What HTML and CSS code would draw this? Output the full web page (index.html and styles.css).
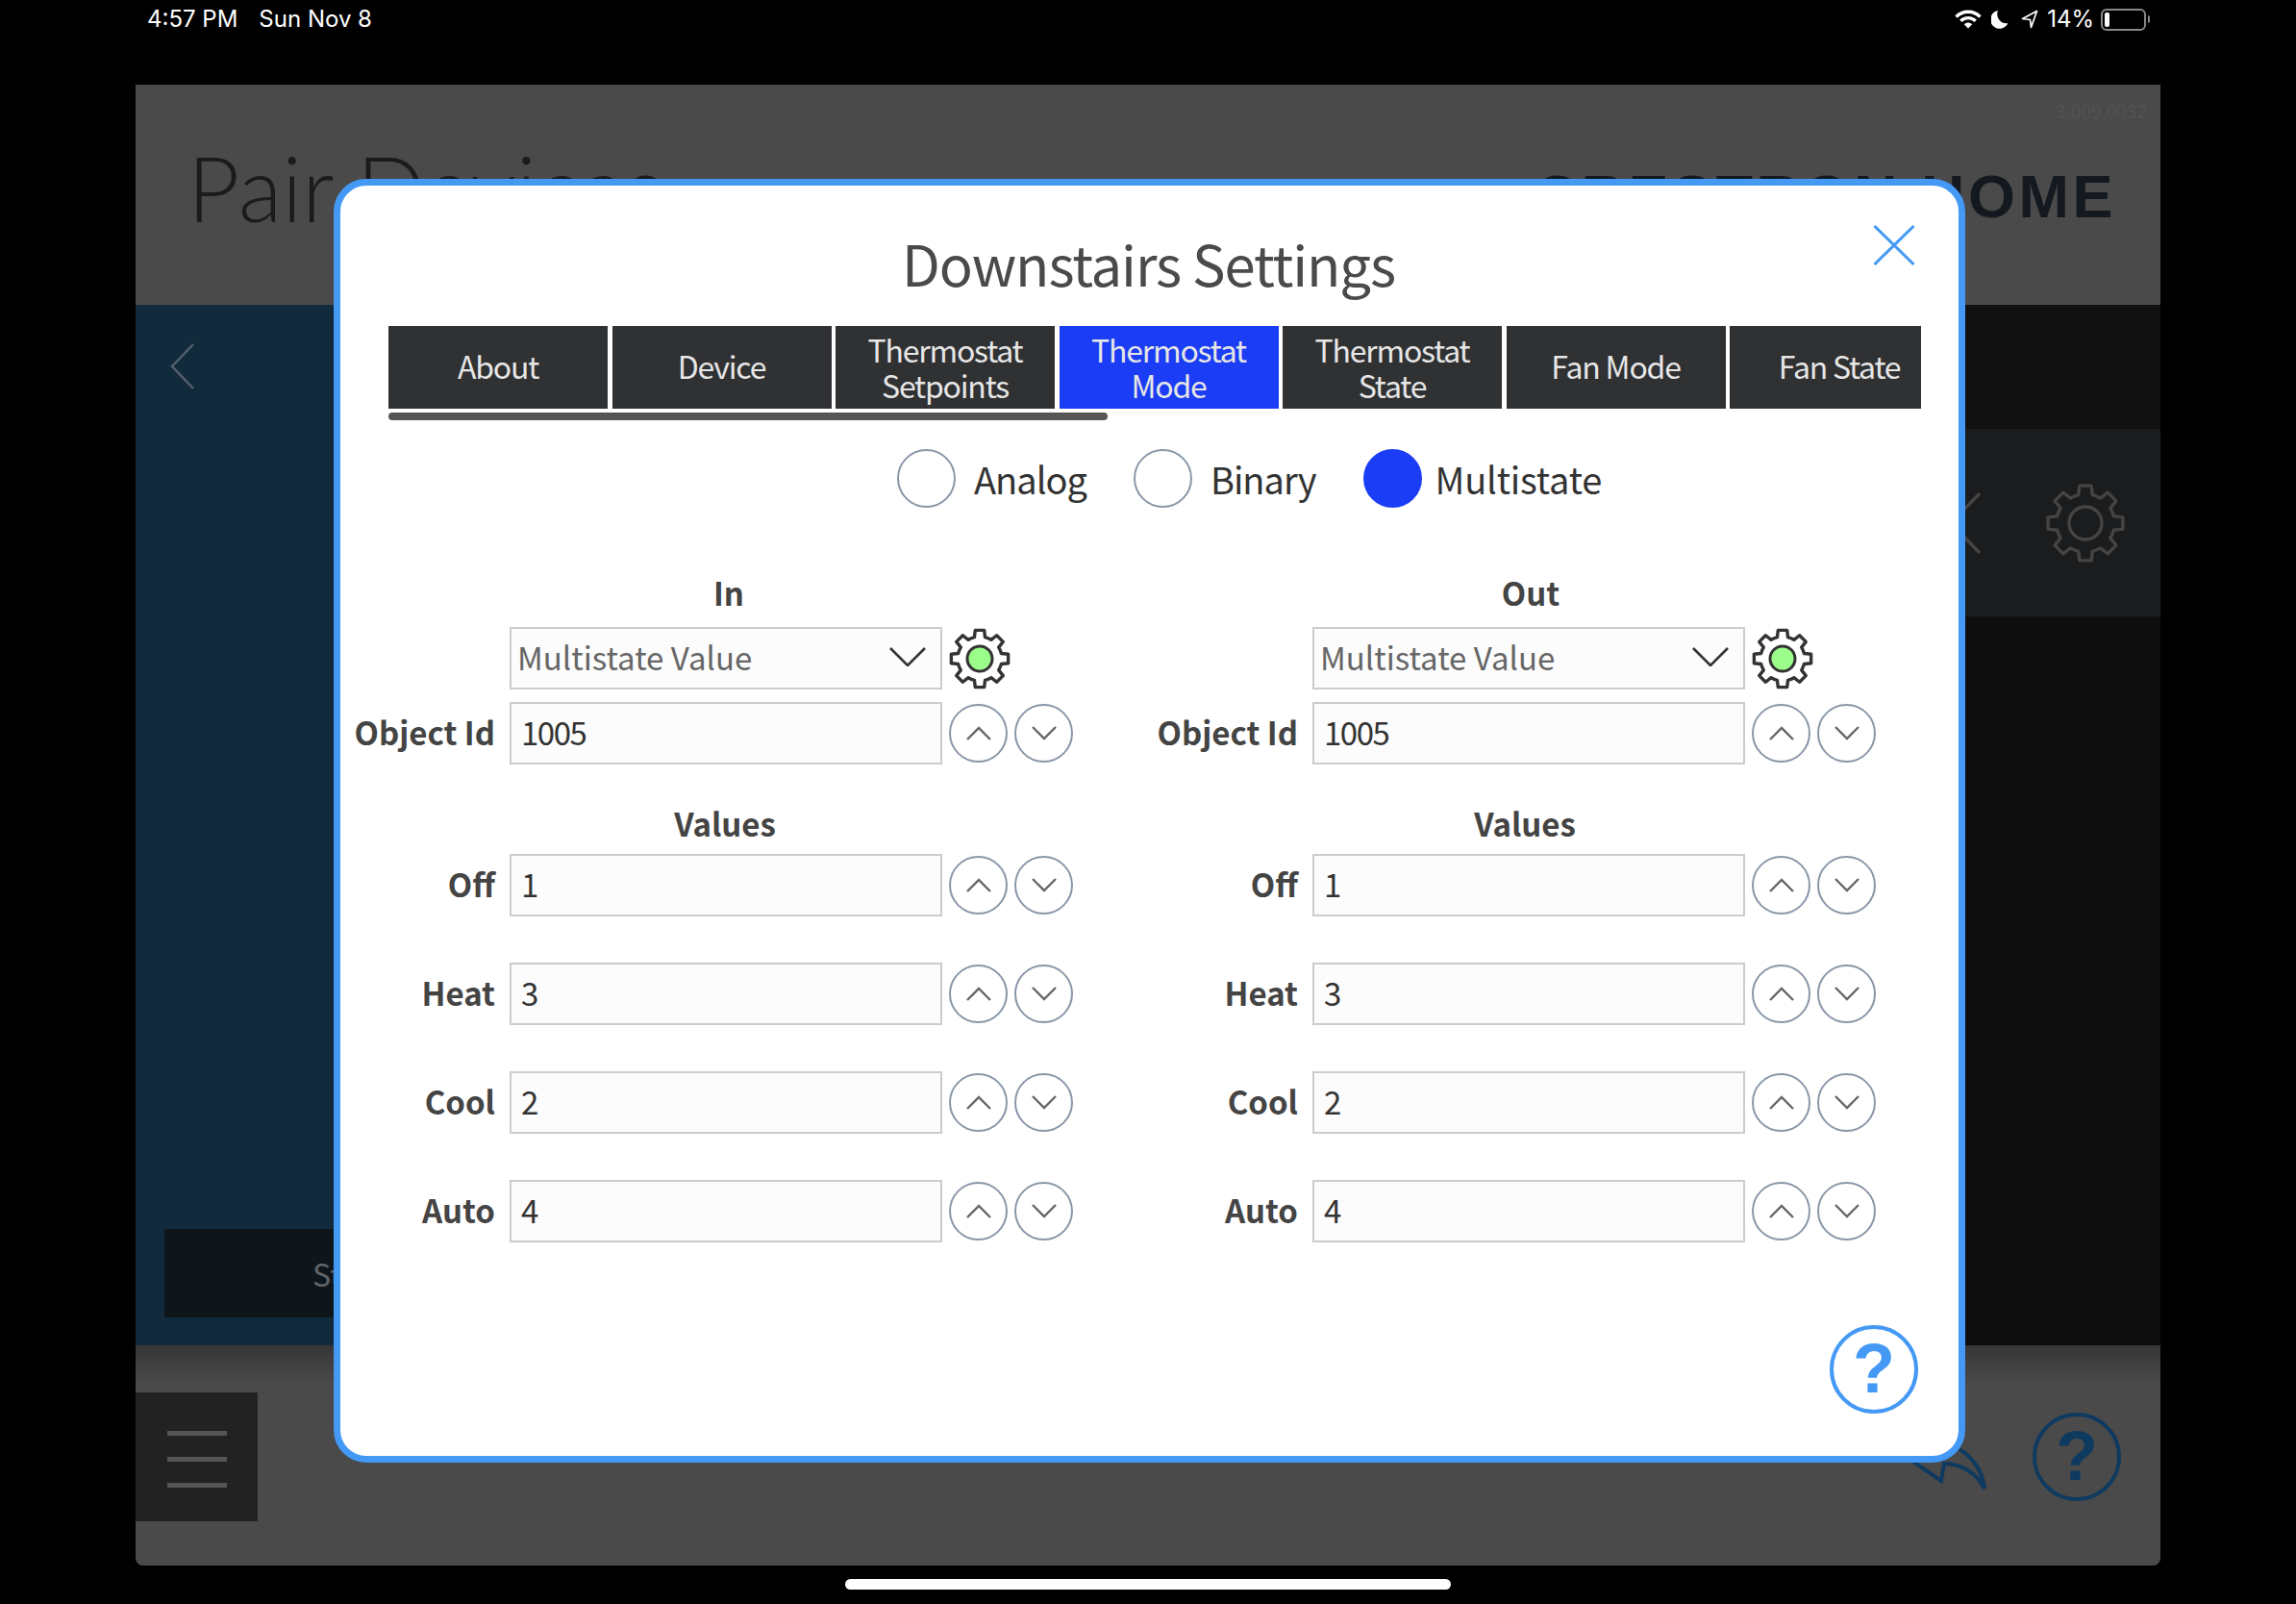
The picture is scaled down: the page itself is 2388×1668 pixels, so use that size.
FILE: index.html
```html
<!DOCTYPE html>
<html lang="en">

<head>
    <meta charset="UTF-8">
    <meta name="viewport" content="width=device-width, initial-scale=1.0">
    <title>Downstairs Settings</title>
    <link rel="stylesheet" href="styles.css">
</head>

<body>
    <svg class="defs" width="0" height="0">
        <defs>
            <path id="gearShape" d="M-5.56 -22.32L-4.69 -29.63L4.69 -29.63L5.56 -22.32A23 23 0 0 1 11.85 -19.71L17.64 -24.27L24.27 -17.64L19.71 -11.85A23 23 0 0 1 22.32 -5.56L29.63 -4.69L29.63 4.69L22.32 5.56A23 23 0 0 1 19.71 11.85L24.27 17.64L17.64 24.27L11.85 19.71A23 23 0 0 1 5.56 22.32L4.69 29.63L-4.69 29.63L-5.56 22.32A23 23 0 0 1 -11.85 19.71L-17.64 24.27L-24.27 17.64L-19.71 11.85A23 23 0 0 1 -22.32 5.56L-29.63 4.69L-29.63 -4.69L-22.32 -5.56A23 23 0 0 1 -19.71 -11.85L-24.27 -17.64L-17.64 -24.27L-11.85 -19.71A23 23 0 0 1 -5.56 -22.32Z" />
            <g id="statusGear">
                <use href="#gearShape" fill="#fff" stroke="#333" stroke-width="3.4" stroke-linejoin="round" />
                <circle r="13" fill="#9bfd8a" stroke="#333" stroke-width="3" />
            </g>
        </defs>
    </svg>

    <div class="status-bar">
        <div class="status-left"><span>4:57 PM</span><span>Sun Nov 8</span></div>
        <div class="status-right">
            <svg width="28" height="20" viewBox="0 0 28 20">
                <path d="M1.5 7.5A17.5 17.5 0 0 1 26.5 7.5" fill="none" stroke="#fff" stroke-width="3.4" />
                <path d="M6.3 11.8A11 11 0 0 1 21.7 11.8" fill="none" stroke="#fff" stroke-width="3.4" />
                <path d="M14 19.5L9.8 15.3A6 6 0 0 1 18.2 15.3Z" fill="#fff" />
            </svg>
            <svg class="moon" width="18" height="20" viewBox="0 0 18 20">
                <path d="M7 1A9.5 9.5 0 1 0 17.5 14A9.5 9.5 0 0 1 7 1Z" fill="#fff" />
            </svg>
            <svg class="arrow" width="18" height="20" viewBox="0 0 18 20">
                <path d="M16.5 1.5L1.5 9.5L9.5 10.5L10.5 18.5Z" fill="none" stroke="#fff" stroke-width="1.7" stroke-linejoin="round" />
            </svg>
            <span class="battery-text">14%</span>
            <div class="battery"><div class="battery-fill"></div></div>
            <div class="battery-nub"></div>
        </div>
    </div>

    <div class="app">
        <div class="app-header">
            <div class="page-title">Pair Devices</div>
            <div class="header-right">
                <div class="version">3.009.0032</div>
                <div class="brand">CRESTRON HOME</div>
            </div>
        </div>

        <div class="app-main">
            <div class="side">
                <svg class="back" width="26" height="48" viewBox="0 0 26 48">
                    <path d="M24 1L2 24L24 47" fill="none" stroke="#55606a" stroke-width="2.5" />
                </svg>
                <div class="side-button"><span>Start</span></div>
            </div>
            <div class="content">
                <div class="content-bar"></div>
                <div class="tool-row">
                    <svg width="64" height="64" viewBox="0 0 64 64">
                        <path d="M62 1L2 63M2 1L62 63" fill="none" stroke="#444" stroke-width="3.5" />
                    </svg>
                    <svg width="84" height="84" viewBox="-32 -32 64 64">
                        <use href="#gearShape" fill="none" stroke="#444" stroke-width="2.6" stroke-linejoin="round" />
                        <circle r="13" fill="none" stroke="#444" stroke-width="2.6" />
                    </svg>
                </div>
                <div class="content-rest"></div>
            </div>
        </div>

        <div class="app-footer">
            <div class="menu-button"><i></i><i></i><i></i></div>
            <div class="footer-icons">
                <svg width="86" height="86" viewBox="0 0 86 86">
                    <path d="M10 48L39 68L42 50C60 50 76 60 84 76C82 58 72 44 58 35" fill="none" stroke="#0f3a60" stroke-width="4" />
                </svg>
                <div class="help help-dark">?</div>
            </div>
        </div>

        <div class="modal">
            <div class="modal-title">Downstairs Settings</div>
            <svg class="close" width="44" height="42" viewBox="0 0 44 42">
                <path d="M1.5 1L42.5 41M42.5 1L1.5 41" fill="none" stroke="#4499f5" stroke-width="3" />
            </svg>

            <div class="tabs">
                <div class="tab single">About</div>
                <div class="tab single">Device</div>
                <div class="tab">Thermostat<br>Setpoints</div>
                <div class="tab active">Thermostat<br>Mode</div>
                <div class="tab">Thermostat<br>State</div>
                <div class="tab single">Fan Mode</div>
                <div class="tab single">Fan State</div>
            </div>
            <div class="scrollbar"></div>

            <div class="radios">
                <div class="radio"><div class="dot"></div>Analog</div>
                <div class="radio"><div class="dot"></div>Binary</div>
                <div class="radio"><div class="dot on"></div>Multistate</div>
            </div>

            <div class="columns">
                <div class="column">
                    <div class="row head"><div class="head-text head-in">In</div></div>
                    <div class="row">
                        <div></div>
                        <div class="field select">Multistate Value
                            <svg width="38" height="20" viewBox="0 0 38 20"><path d="M1 1L19 19L37 1" fill="none" stroke="#333" stroke-width="2.6" /></svg>
                        </div>
                        <svg width="64" height="64" viewBox="-32 -32 64 64"><use href="#statusGear" /></svg>
                    </div>
                    <div class="row object-row">
                        <div class="label">Object Id</div>
                        <div class="field">1005</div>
                        <div class="steppers">
                            <div class="step"><svg width="26" height="15" viewBox="0 0 26 15"><path d="M1 14L13 2L25 14" /></svg></div>
                            <div class="step"><svg width="26" height="15" viewBox="0 0 26 15"><path d="M1 1L13 13L25 1" /></svg></div>
                        </div>
                    </div>

                    <div class="row head values-head"><div class="head-text head-values">Values</div></div>
                    <div class="row">
                        <div class="label">Off</div>
                        <div class="field">1</div>
                        <div class="steppers">
                            <div class="step"><svg width="26" height="15" viewBox="0 0 26 15"><path d="M1 14L13 2L25 14" /></svg></div>
                            <div class="step"><svg width="26" height="15" viewBox="0 0 26 15"><path d="M1 1L13 13L25 1" /></svg></div>
                        </div>
                    </div>
                    <div class="row spaced">
                        <div class="label">Heat</div>
                        <div class="field">3</div>
                        <div class="steppers">
                            <div class="step"><svg width="26" height="15" viewBox="0 0 26 15"><path d="M1 14L13 2L25 14" /></svg></div>
                            <div class="step"><svg width="26" height="15" viewBox="0 0 26 15"><path d="M1 1L13 13L25 1" /></svg></div>
                        </div>
                    </div>
                    <div class="row spaced">
                        <div class="label">Cool</div>
                        <div class="field">2</div>
                        <div class="steppers">
                            <div class="step"><svg width="26" height="15" viewBox="0 0 26 15"><path d="M1 14L13 2L25 14" /></svg></div>
                            <div class="step"><svg width="26" height="15" viewBox="0 0 26 15"><path d="M1 1L13 13L25 1" /></svg></div>
                        </div>
                    </div>
                    <div class="row spaced">
                        <div class="label">Auto</div>
                        <div class="field">4</div>
                        <div class="steppers">
                            <div class="step"><svg width="26" height="15" viewBox="0 0 26 15"><path d="M1 14L13 2L25 14" /></svg></div>
                            <div class="step"><svg width="26" height="15" viewBox="0 0 26 15"><path d="M1 1L13 13L25 1" /></svg></div>
                        </div>
                    </div>
                </div>

                <div class="column">
                    <div class="row head"><div class="head-text head-out">Out</div></div>
                    <div class="row">
                        <div></div>
                        <div class="field select">Multistate Value
                            <svg width="38" height="20" viewBox="0 0 38 20"><path d="M1 1L19 19L37 1" fill="none" stroke="#333" stroke-width="2.6" /></svg>
                        </div>
                        <svg width="64" height="64" viewBox="-32 -32 64 64"><use href="#statusGear" /></svg>
                    </div>
                    <div class="row object-row">
                        <div class="label">Object Id</div>
                        <div class="field">1005</div>
                        <div class="steppers">
                            <div class="step"><svg width="26" height="15" viewBox="0 0 26 15"><path d="M1 14L13 2L25 14" /></svg></div>
                            <div class="step"><svg width="26" height="15" viewBox="0 0 26 15"><path d="M1 1L13 13L25 1" /></svg></div>
                        </div>
                    </div>

                    <div class="row head values-head"><div class="head-text head-values">Values</div></div>
                    <div class="row">
                        <div class="label">Off</div>
                        <div class="field">1</div>
                        <div class="steppers">
                            <div class="step"><svg width="26" height="15" viewBox="0 0 26 15"><path d="M1 14L13 2L25 14" /></svg></div>
                            <div class="step"><svg width="26" height="15" viewBox="0 0 26 15"><path d="M1 1L13 13L25 1" /></svg></div>
                        </div>
                    </div>
                    <div class="row spaced">
                        <div class="label">Heat</div>
                        <div class="field">3</div>
                        <div class="steppers">
                            <div class="step"><svg width="26" height="15" viewBox="0 0 26 15"><path d="M1 14L13 2L25 14" /></svg></div>
                            <div class="step"><svg width="26" height="15" viewBox="0 0 26 15"><path d="M1 1L13 13L25 1" /></svg></div>
                        </div>
                    </div>
                    <div class="row spaced">
                        <div class="label">Cool</div>
                        <div class="field">2</div>
                        <div class="steppers">
                            <div class="step"><svg width="26" height="15" viewBox="0 0 26 15"><path d="M1 14L13 2L25 14" /></svg></div>
                            <div class="step"><svg width="26" height="15" viewBox="0 0 26 15"><path d="M1 1L13 13L25 1" /></svg></div>
                        </div>
                    </div>
                    <div class="row spaced">
                        <div class="label">Auto</div>
                        <div class="field">4</div>
                        <div class="steppers">
                            <div class="step"><svg width="26" height="15" viewBox="0 0 26 15"><path d="M1 14L13 2L25 14" /></svg></div>
                            <div class="step"><svg width="26" height="15" viewBox="0 0 26 15"><path d="M1 1L13 13L25 1" /></svg></div>
                        </div>
                    </div>
                </div>
            </div>

            <div class="modal-bottom"><div class="help">?</div></div>
        </div>
    </div>

    <div class="home-row"><div class="home-bar"></div></div>
</body>

</html>
```

FILE: styles.css
```css
* {
    box-sizing: border-box;
}

body {
    margin: 0;
    width: 2388px;
    height: 1668px;
    overflow: hidden;
    background: #000;
    font-family: "Noto Sans CJK JP", "Noto Sans", sans-serif;
}

.defs {
    position: absolute;
}

/* ------ STATUS BAR ------ */
.status-bar {
    height: 88px;
    padding: 0 152px 0 153px;
    display: flex;
    justify-content: space-between;
    align-items: flex-start;
    color: #fff;
    font-family: Inter, Roboto, sans-serif;
    font-size: 24px;
    line-height: 40px;
}

.status-left {
    display: flex;
    gap: 22px;
}

.status-right {
    display: flex;
    align-items: center;
    height: 40px;
}

.moon {
    margin-left: 10px;
}

.arrow {
    margin-left: 13px;
}

.battery-text {
    margin-left: 9px;
}

.battery {
    width: 47px;
    height: 23px;
    margin-left: 7px;
    padding: 2px;
    border: 2px solid #888;
    border-radius: 6px;
}

.battery-fill {
    width: 5px;
    height: 100%;
    background: #fff;
    border-radius: 2px;
}

.battery-nub {
    width: 2px;
    height: 8px;
    margin-left: 2px;
    background: #888;
    border-radius: 0 2px 2px 0;
}

/* ------ APP BEHIND THE DIALOG ------ */
.app {
    position: relative;
    width: 2106px;
    height: 1540px;
    margin-left: 141px;
    border-radius: 0 0 8px 8px;
    overflow: hidden;
    background: #4a4a4a;
}

.app-header {
    height: 229px;
    padding: 0 46px 0 54px;
    display: flex;
    justify-content: space-between;
}

.page-title {
    margin-top: 47px;
    font-family: Lato, sans-serif;
    font-weight: 300;
    font-size: 94px;
    line-height: 120px;
    color: #1b1b1b;
}

.header-right {
    display: flex;
    flex-direction: column;
    align-items: flex-end;
}

.version {
    margin: 13px -32px 0 0;
    font-size: 19px;
    line-height: 28px;
    color: #525252;
}

.brand {
    margin-top: 39px;
    font-family: "Liberation Sans", sans-serif;
    font-weight: 700;
    font-size: 63px;
    line-height: 72px;
    letter-spacing: 3.5px;
    color: #14181f;
}

.app-main {
    height: 1082px;
    display: flex;
}

.side {
    width: 400px;
    padding: 40px 0 0 36px;
    background: #112a3c;
}

.back {
    display: block;
}

.side-button {
    width: 380px;
    height: 92px;
    margin: 873px 0 0 -6px;
    background: #0e161c;
    color: #5f6468;
    font-size: 32px;
    line-height: 92px;
    text-align: center;
}

.content {
    flex: 1;
    display: flex;
    flex-direction: column;
    background: #0e0e0e;
}

.content-bar {
    height: 129px;
    background: #111;
}

.tool-row {
    height: 195px;
    padding: 0 36px 0 0;
    display: flex;
    justify-content: flex-end;
    align-items: center;
    gap: 66px;
    background: #1a1c1e;
}

.content-rest {
    flex: 1;
}

.app-footer {
    height: 229px;
    padding-right: 41px;
    display: flex;
    justify-content: space-between;
    background: linear-gradient(#363636, #4a4a4a 40px);
}

.menu-button {
    width: 127px;
    height: 134px;
    margin-top: 49px;
    padding-top: 40px;
    display: flex;
    flex-direction: column;
    align-items: center;
    gap: 22px;
    background: #222;
}

.menu-button i {
    width: 62px;
    height: 5px;
    background: #555;
}

.footer-icons {
    display: flex;
    align-items: center;
    gap: 48px;
    padding-top: 3px;
}

.help {
    width: 92px;
    height: 92px;
    border: 4.5px solid #4499f5;
    border-radius: 50%;
    color: #4499f5;
    font-family: "Liberation Sans", sans-serif;
    font-weight: 700;
    font-size: 72px;
    line-height: 82px;
    text-align: center;
}

.help-dark {
    border-color: #0f3a60;
    color: #0f3a60;
}

/* ------ DIALOG ------ */
.modal {
    position: absolute;
    left: 206px;
    top: 98px;
    width: 1697px;
    height: 1335px;
    border: 7px solid #4499f5;
    border-radius: 34px;
    background: #fff;
}

.modal-title {
    padding-top: 50px;
    height: 146px;
    padding-right: 2px;
    font-size: 58px;
    line-height: 60px;
    letter-spacing: -1.1px;
    text-align: center;
    color: #4a4a4a;
}

.close {
    position: absolute;
    right: 45px;
    top: 41px;
}

.tabs {
    width: 1594px;
    margin-left: 50px;
    display: flex;
    gap: 4.5px;
    overflow: hidden;
}

.tab {
    flex: 0 0 228px;
    height: 86px;
    display: flex;
    align-items: center;
    justify-content: center;
    background: #303133;
    color: #e6e6e6;
    font-size: 32px;
    line-height: 37px;
    letter-spacing: -1.2px;
    text-align: center;
}

.tab.single {
    padding-bottom: 3px;
}

.tab.active {
    background: #1a3df5;
}

.scrollbar {
    width: 748px;
    height: 8px;
    margin: 4px 0 0 50px;
    background: #555;
    border-radius: 4px;
}

.radios {
    margin: 29px 0 0 579px;
    height: 62px;
    display: flex;
    gap: 49px;
}

.radio {
    display: flex;
    align-items: center;
    gap: 19px;
    font-size: 38px;
    letter-spacing: -1px;
    color: #333;
}

.radio:last-child {
    gap: 14px;
    letter-spacing: -0.2px;
}

.dot {
    width: 61px;
    height: 61px;
    border: 2.5px solid #8a97a8;
    border-radius: 50%;
}

.dot.on {
    background: #1a3df5;
    border-color: #1a3df5;
}

.columns {
    margin-top: 59px;
    display: flex;
    gap: 73px;
}

.column {
    width: 762px;
}

.row {
    display: grid;
    grid-template-columns: 159px 450px 129px;
    column-gap: 17px;
    align-items: center;
    height: 65px;
}

.row > svg {
    margin-left: -10px;
}

.head {
    height: 60px;
    margin-bottom: 5px;
}

.head-text {
    grid-column: 2;
    padding-bottom: 2px;
    font-weight: 700;
    font-size: 33px;
    line-height: 58px;
    text-align: center;
    color: #444;
}

.head-in {
    padding-left: 6px;
}

.head-out {
    padding-left: 4px;
}

.head-values {
    padding-right: 2px;
    padding-bottom: 0;
}

.column + .column .head-values {
    padding-right: 8px;
}

.object-row {
    margin-top: 13px;
}

.values-head {
    margin-top: 31px;
    margin-bottom: 2px;
}

.spaced {
    margin-top: 48px;
}

.label {
    margin-right: -2px;
    padding-bottom: 3px;
    font-weight: 700;
    font-size: 33px;
    text-align: right;
    white-space: nowrap;
    color: #444;
}

.field {
    height: 65px;
    padding: 0 0 3px 10px;
    display: flex;
    align-items: center;
    justify-content: space-between;
    background: #fcfcfc;
    border: 2px solid #ccc;
    font-size: 33px;
    letter-spacing: -1.5px;
    color: #333;
}

.select {
    padding: 0 15px 3px 6px;
    letter-spacing: 0;
    color: #666;
}

.steppers {
    margin-left: -10px;
    display: flex;
    gap: 7px;
}

.step {
    width: 61px;
    height: 61px;
    display: flex;
    align-items: center;
    justify-content: center;
    border: 2.5px solid #8a97a8;
    border-radius: 50%;
}

.step path {
    fill: none;
    stroke: #666;
    stroke-width: 2.4;
}

.modal-bottom {
    margin-top: 86px;
    padding-right: 42px;
    display: flex;
    justify-content: flex-end;
}

/* ------ HOME INDICATOR ------ */
.home-row {
    padding-top: 14px;
    display: flex;
    justify-content: center;
}

.home-bar {
    width: 630px;
    height: 11px;
    background: #fff;
    border-radius: 6px;
}
```
